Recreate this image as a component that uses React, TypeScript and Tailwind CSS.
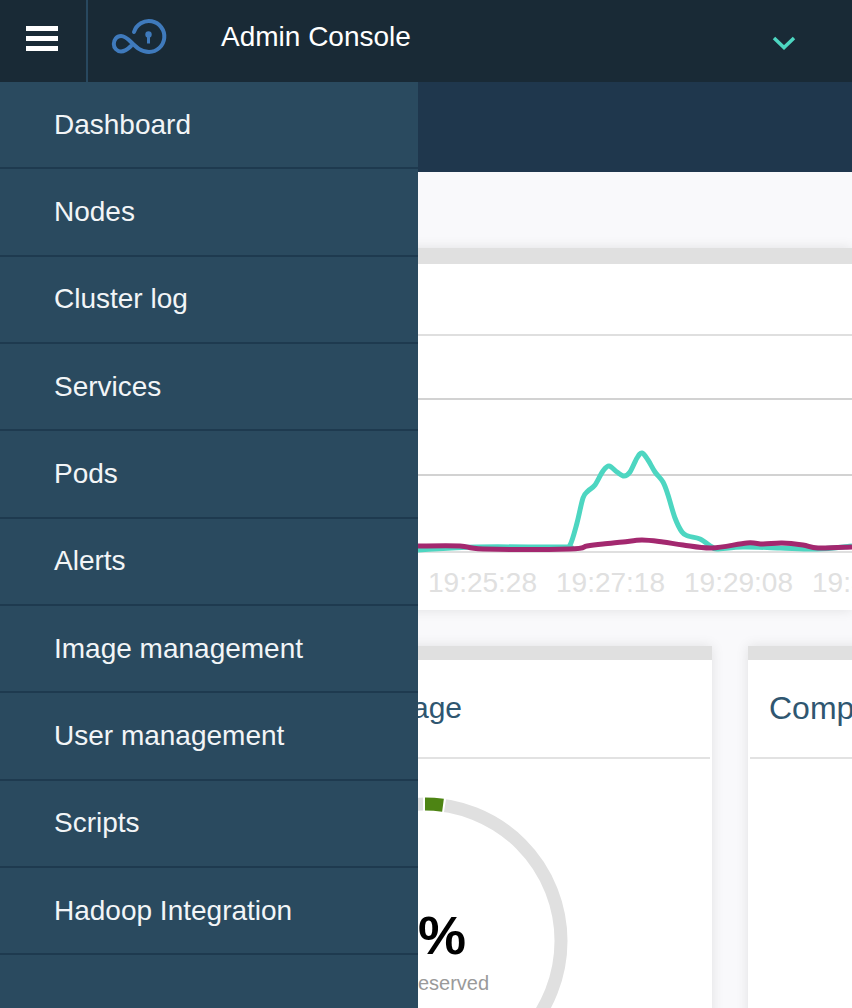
const menuItems = [
  'Dashboard',
  'Nodes',
  'Cluster log',
  'Services',
  'Pods',
  'Alerts',
  'Image management',
  'User management',
  'Scripts',
  'Hadoop Integration',
];

// traced from the chart, in page coordinates
const usedLine = [
  [418, 550], [477, 547], [563, 547], [570, 545], [577, 523], [583, 498], [588, 491], [595, 485],
  [603, 471], [609, 466], [617, 472], [624, 476], [630, 472], [637, 458], [642, 453], [648, 460],
  [655, 472], [663, 482], [668, 495], [675, 518], [682, 532], [688, 536], [700, 539], [712, 547],
  [717, 549], [743, 547], [780, 548], [817, 549], [852, 546],
];
const reservedLine = [
  [418, 546], [460, 546], [483, 549], [570, 549], [587, 546], [603, 544], [623, 542], [642, 540],
  [663, 542], [683, 545], [712, 548], [747, 543], [763, 544], [782, 543], [803, 545], [818, 548], [852, 547],
];
const labels = [
  { x: 428, text: '19:25:28' },
  { x: 556, text: '19:27:18' },
  { x: 684, text: '19:29:08' },
  { x: 812, text: '19:30:58' },
];

// catmull-rom through the points so the line stays smooth
function smooth(points: number[][]) {
  let d = `M${points[0][0]} ${points[0][1]}`;
  for (let i = 0; i < points.length - 1; i++) {
    const p0 = points[i - 1] || points[i];
    const p1 = points[i];
    const p2 = points[i + 1];
    const p3 = points[i + 2] || p2;
    const c1x = p1[0] + (p2[0] - p0[0]) / 6;
    const c1y = p1[1] + (p2[1] - p0[1]) / 6;
    const c2x = p2[0] - (p3[0] - p1[0]) / 6;
    const c2y = p2[1] - (p3[1] - p1[1]) / 6;
    d += ` C${c1x} ${c1y} ${c2x} ${c2y} ${p2[0]} ${p2[1]}`;
  }
  return d;
}

function Logo() {
  return (
    <svg width="58" height="38" viewBox="110 18 58 38" fill="none" className="mb-[8px] ml-[22px]">
      <path
        d="M134 32 A15.5 15.5 0 1 1 149 52 C141 52 136 47 131 42 C127.5 38.5 124.5 36 121 36 C116.5 36 113.8 40 113.8 44 C113.8 48 117 51.5 121 51.5 C125 51.5 128 49 131 46"
        stroke="#3f7abc"
        strokeWidth="4"
        strokeLinecap="round"
      />
      <circle cx="148.5" cy="34.5" r="3.2" fill="#3f7abc" />
      <rect x="147" y="35" width="3" height="8.5" fill="#3f7abc" />
    </svg>
  );
}

export default function App() {
  return (
    <div className="relative h-[1008px] w-[852px] overflow-hidden bg-[#f9f9fb] font-['Liberation_Sans',sans-serif]">
      <header className="flex h-[82px] items-center bg-[#192a36]">
        <div className="flex h-full w-[88px] shrink-0 flex-col items-start gap-[5px] border-r-2 border-[#28485f] pl-[26px] pt-[26px]">
          <span className="h-[5px] w-[32px] bg-white" />
          <span className="h-[5px] w-[32px] bg-white" />
          <span className="h-[5px] w-[32px] bg-white" />
        </div>
        <Logo />
        <span className="mb-[8px] ml-[53px] text-[28px] text-white">Admin Console</span>
        <svg width="24" height="14" viewBox="0 0 24 14" fill="none" className="ml-[361px] mt-[4px] shrink-0">
          <path d="M2 2 L12 11.5 L22 2" stroke="#4dd6c1" strokeWidth="3.5" />
        </svg>
      </header>
      <div className="h-[90px] bg-[#1f374d]" />

      <main className="pl-[136px] pt-[76px]">
        <section className="w-[716px] border-t-[16px] border-[#e0e0e0] bg-white shadow-[0_0_12px_rgba(0,0,0,0.1)]">
          <svg width="716" height="346" viewBox="136 264 716 346" className="block">
            <line x1="136" x2="852" y1="335" y2="335" stroke="#dfdfdf" strokeWidth="2" />
            <line x1="136" x2="852" y1="399" y2="399" stroke="#d2d2d2" strokeWidth="2" />
            <line x1="136" x2="852" y1="475" y2="475" stroke="#d2d2d2" strokeWidth="2" />
            <line x1="136" x2="852" y1="552" y2="552" stroke="#dfdfdf" strokeWidth="2" />
            <path d={smooth(usedLine)} fill="none" stroke="#4dd6c1" strokeWidth="5" />
            <path d={smooth(reservedLine)} fill="none" stroke="#a3286f" strokeWidth="5" />
            {labels.map((label) => (
              <text key={label.x} x={label.x} y="592" fontSize="28" fill="#e0e0e0">
                {label.text}
              </text>
            ))}
          </svg>
        </section>

        <div className="mt-[36px] flex gap-[36px]">
          <section className="h-[400px] w-[576px] shrink-0 border-t-[14px] border-[#e0e0e0] bg-white shadow-[0_0_12px_rgba(0,0,0,0.1)]">
            <div className="mr-[2px] flex h-[99px] items-center justify-end border-b-2 border-[#e2e2e2] pb-[2px] pr-[248px]">
              <h2 className="text-[30px] text-[#2f5670]">Storage</h2>
            </div>
            <div className="relative">
              <svg width="300" height="300" viewBox="0 0 300 300" fill="none" className="absolute left-[138px] top-[32px]">
                <circle cx="150" cy="150" r="137" stroke="#e0e0e0" strokeWidth="13" />
                <path d="M149 13 A137 137 0 0 1 171 14.6" stroke="#ffffff" strokeWidth="15" />
                <path d="M151 13 A137 137 0 0 1 169 14.2" stroke="#4d8413" strokeWidth="13" />
              </svg>
              <div className="absolute left-[138px] top-[145px] flex w-[300px] flex-col items-center">
                <span className="ml-[6px] text-[54px] font-bold leading-[62px] text-black">0%</span>
                <span className="ml-[8px] mt-[4px] whitespace-nowrap text-[20px] leading-[26px] text-[#9a9a9a]">Disk reserved</span>
              </div>
            </div>
          </section>
          <section className="h-[400px] w-[300px] shrink-0 border-t-[14px] border-[#e0e0e0] bg-white shadow-[0_0_12px_rgba(0,0,0,0.1)]">
            <div className="ml-[2px] flex h-[99px] items-center border-b-2 border-[#e2e2e2] pb-[2px] pl-[19px]">
              <h2 className="text-[32px] text-[#2f5670]">Compute</h2>
            </div>
          </section>
        </div>
      </main>

      <nav className="absolute bottom-0 left-0 top-[82px] w-[418px] bg-[#2a4a5f]">
        {menuItems.map((item) => (
          <a
            key={item}
            className="flex h-[87.33px] items-center border-b-2 border-[#1e3a4f] pl-[54px] text-[28px] text-[#f2f5f7]"
          >
            {item}
          </a>
        ))}
      </nav>
    </div>
  );
}
